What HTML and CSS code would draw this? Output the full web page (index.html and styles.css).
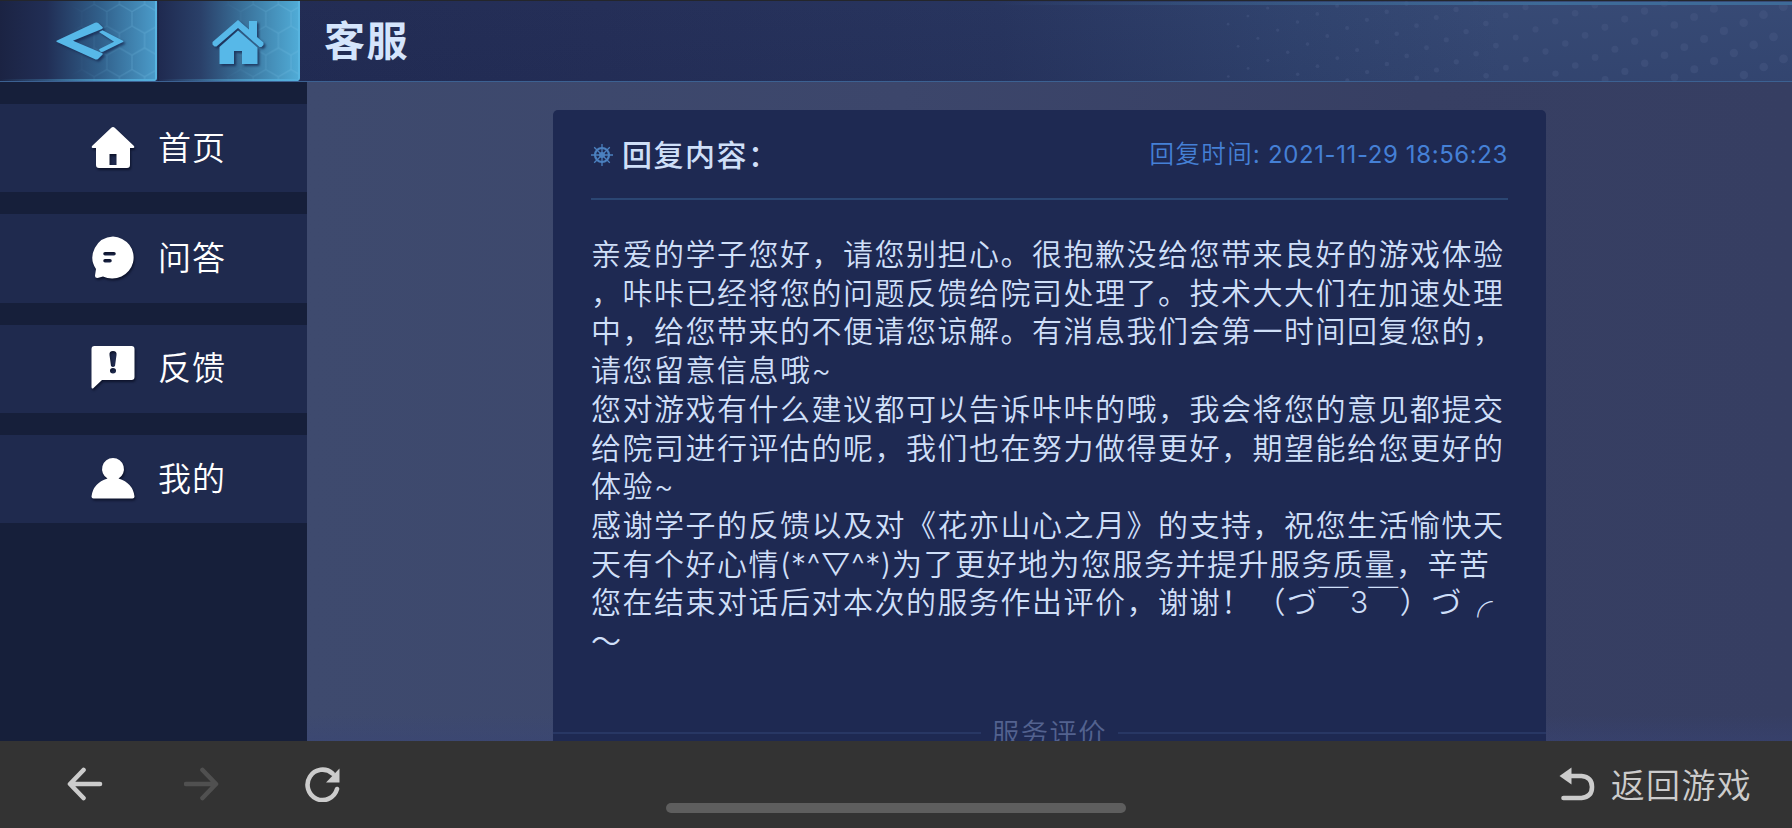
FILE: index.html
```html
<!DOCTYPE html>
<html lang="zh-CN">
<head>
    <meta charset="UTF-8">
    <title>客服</title>

    <link rel="stylesheet" href="styles.css">
</head>
<body>

<div id="page">
    <header class="header">
        <svg class="header-dots" id="dots" width="592" height="80" viewBox="0 0 592 80"></svg>
        <a class="tab tab-back">
            <svg class="hex" width="100%" height="100%">
                <defs>
                    <pattern id="hexes" width="25.2" height="43.6" patternUnits="userSpaceOnUse" patternTransform="translate(6 -4)">
                        <path d="M12.6 0v7.3M12.6 7.3L0 14.5M12.6 7.3l12.6 7.2M0 14.5v14.6M25.2 14.5v14.6M0 29.1l12.6 7.2 12.6-7.2M12.6 36.3v7.3" fill="none" stroke="#7cc4e8" stroke-width="1.2"/>
                    </pattern>
                </defs>
                <rect width="100%" height="100%" fill="url(#hexes)"/>
            </svg>
            <svg class="tab-icon" width="68" height="38" viewBox="0 0 68 38">
                <path d="M1 18.5L39 .8q2-.8 3.500.4L46.500 5q1 1-.5 2L17 18.800 46 31q1.300.8.300 1.800L42 37q-1.400 1-3.500 0L1 20q-1.200-.8 0-1.500z"/>
                <path d="M43 10l3.500-1.800L67 18.700q1 .8 0 1.400L47 29.800q-2 .5-3-.6l-1-2 15-7.400z"/>
            </svg>
        </a>
        <a class="tab tab-home">
            <svg class="hex" width="100%" height="100%">
                <rect width="100%" height="100%" fill="url(#hexes)"/>
            </svg>
            <svg class="tab-icon" width="52" height="44" viewBox="0 0 52 44">
                <path d="M26 0L37 9.500V1h8v16l6.500 5.500v2.500l-2 2-2 0L26 8 4.500 26.500l-2 0-2-2V22z"/>
                <path d="M26 10.500l19.500 17V44h-15.500V31h-8v13H7.500V27z"/>
            </svg>
        </a>
        <h1 class="title">客服</h1>
    </header>

    <div class="main">
        <nav class="menu">
            <a class="menu-item">
                <svg class="menu-icon" viewBox="0 0 44 44">
                    <path fill-rule="evenodd" d="M22 1q1 0 2 1l19 18q1 1.500-.5 2H39v17q0 3-3 3H8q-3 0-3-3V22H1.500q-1.500-.5-.5-2L20 2q1-1 2-1zM18.500 28v11h7V28z"/>
                </svg>
                <span>首页</span>
            </a>
            <a class="menu-item">
                <svg class="menu-icon" viewBox="0 0 44 44">
                    <path fill-rule="evenodd" d="M22 .5a21.500 21 0 1 1-10 40L6.500 42Q4 42 4 39.500L5 33A21.500 21 0 0 1 22 .5zM14 16a1.500 1.500 0 0 0 0 3.500h9a1.500 1.500 0 0 0 0-3.500zM14 23a1.500 1.500 0 0 0 0 3.500h5a1.500 1.500 0 0 0 0-3.500z"/>
                </svg>
                <span>问答</span>
            </a>
            <a class="menu-item">
                <svg class="menu-icon" viewBox="0 0 44 44">
                    <path fill-rule="evenodd" d="M3.500 0h37Q43.500 0 43.500 3v28q0 3-3 3H11L2 42.500Q.5 43 .5 41V3q0-3 3-3zM22 5q-4 0-3.500 4L20 20q2 2 4 0l1.500-11Q26 5 22 5zM22 22a3 2.700 0 1 0 0 5.400 3 2.700 0 1 0 0-5.400z"/>
                </svg>
                <span>反馈</span>
            </a>
            <a class="menu-item">
                <svg class="menu-icon" viewBox="0 0 44 44">
                    <path d="M22 1a11 11 0 0 1 5.500 20.500Q42 26 43.500 39.500q0 2-2 2H2.500q-2 0-2-2Q2 26 16.500 21.500A11 11 0 0 1 22 1z"/>
                </svg>
                <span>我的</span>
            </a>
        </nav>

        <div class="content">
            <div class="card">
                <div class="card-head">
                    <svg class="wheel" viewBox="0 0 22 22">
                        <circle cx="11" cy="11" r="7" stroke-width="2.2"/>
                        <circle cx="11" cy="11" r="2" stroke-width="2"/>
                        <path d="M11 0v22M0 11h22M3.200 3.200l15.600 15.600M18.800 3.200L3.200 18.800" stroke-width="1.3"/>
                    </svg>
                    <h2>回复内容：</h2>
                    <span class="time">回复时间: <span class="digits">2021-11-29 18:56:23</span></span>
                </div>
                <div class="text">
                    <p>
                        亲爱的学子您好，请您别担心。很抱歉没给您带来良好的游戏体验<br>，咔咔已经将您的问题反馈给院司处理了。技术大大们在加速处理<br>中，给您带来的不便请您谅解。有消息我们会第一时间回复您的，<br>请您留意信息哦<span class="latin">~</span>
                    </p>
                    <p>
                        您对游戏有什么建议都可以告诉咔咔的哦，我会将您的意见都提交<br>给院司进行评估的呢，我们也在努力做得更好，期望能给您更好的<br>体验<span class="latin">~</span>
                    </p>
                    <p>
                        感谢学子的反馈以及对《花亦山心之月》的支持，祝您生活愉快天<br>天有个好心情<span class="face">(*^▽^*)</span>为了更好地为您服务并提升服务质量，辛苦<br>您在结束对话后对本次的服务作出评价，谢谢！<span class="kiss">（づ￣<span class="latin">3</span>￣）づ</span><span class="arc">╭</span><br>～
                    </p>
                </div>
                <div class="rate"><span>服务评价</span></div>
            </div>
        </div>
    </div>

    <footer class="toolbar">
        <svg class="nav-icon" viewBox="0 0 36 36">
            <path d="M16.500 4L3 18l13.500 14M4 18h29"/>
        </svg>
        <svg class="nav-icon disabled" viewBox="0 0 36 36">
            <path d="M18.500 4L32 18 18.500 32M31 18H2"/>
        </svg>
        <svg class="nav-icon reload" viewBox="0 0 36 36">
            <path d="M28.500 7.500A15 15.200 0 1 0 33 23"/>
            <path class="solid" d="M35.500 2.500V16.500H22z"/>
        </svg>
        <a class="return">
            <svg class="nav-icon" viewBox="0 0 36 36">
                <path d="M10 10h12.500q10.500 1 10.500 11t-10.500 11H4.500"/>
                <path class="solid" d="M12.500 1.500v17L.5 10z"/>
            </svg>
            <span>返回游戏</span>
        </a>
        <i class="handle"></i>
    </footer>
</div>

    <script>
        'use strict';

        const svg = document.querySelector('#dots');

        // наклонная сетка точек, радиус растёт вправо
        for (let i = -20; i < 40; i++) {
            for (let j = -10; j < 20; j++) {
                const x = 67.7 + i * 19.8 + j * 49.6;
                const y = 7 - i * 8.1 + j * 5.9;

                if (x < 25 || x > 592 || y < 0 || y > 80) {
                    continue;
                }

                const dot = document.createElementNS('http://www.w3.org/2000/svg', 'circle');

                dot.setAttribute('cx', x);
                dot.setAttribute('cy', y);
                dot.setAttribute('r', 1.2 + x / 592 * 3.3);
                svg.appendChild(dot);
            }
        }
    </script>

</body>
</html>
```
FILE: styles.css
```css
* {
    box-sizing: border-box;
}

body {
    margin: 0;
    font-family: "Noto Sans CJK SC", sans-serif;
    font-weight: 350;
    background-color: #333;
}

svg {
    display: block;
    flex: none;
}

h1, h2, p {
    margin: 0;
}

#page {
    display: flex;
    flex-direction: column;
    width: 1792px;
    height: 828px;
    overflow: hidden;
}

/* header */
.header {
    position: relative;
    display: flex;
    flex: none;
    height: 82px;
    border-top: 1px solid #24262b;
    border-bottom: 1px solid #3c6192;
    background: linear-gradient(to bottom, rgba(62, 120, 165, 0) 0, rgba(20, 30, 70, 0.12) 100%),
        linear-gradient(to right, #202a50 0, #252f58 600px, #28355f 1000px, #31446f 1300px, #374a75 1500px, #374a75 100%);
}

.header::after {
    content: "";
    position: absolute;
    top: 1px;
    right: 0;
    width: 800px;
    height: 3px;
    background: linear-gradient(to right, rgba(62, 107, 152, 0), #3e6b98 70%);
}

.header-dots {
    position: absolute;
    right: 0;
    top: 0;
    fill: #485984;
    opacity: 0.45;
}

.tab {
    position: relative;
    display: flex;
    align-items: center;
    height: 80px;
    border-right: 2px solid #58b5e0;
    border-bottom-right-radius: 3px;
    background: linear-gradient(to right, #1b2343 0, #212e55 30%, #31608b 65%, #4a9ac8 100%);
}

.tab::after {
    content: "";
    position: absolute;
    left: 0;
    right: 0;
    bottom: 0;
    height: 2px;
    background: linear-gradient(to right, rgba(80, 170, 215, 0), #54aedb);
}

.tab-back {
    width: 157px;
    padding-left: 56px;
}

.tab-home {
    width: 142px;
    margin-left: 1px;
    padding-left: 53px;
    border-left: 1px solid #1c2544;
    background: linear-gradient(to right, #1f2a50 0, #2a4069 30%, #397099 60%, #50abd6 100%);
}

.tab-icon {
    position: relative;
    fill: #57b8e8;
    filter: drop-shadow(2px 2px 1px rgba(20, 35, 75, 0.7));
}

.tab-home .tab-icon {
    margin-top: 2px;
}

.hex {
    position: absolute;
    left: 0;
    top: 0;
    opacity: 0.28;
    -webkit-mask-image: linear-gradient(to right, transparent 45%, #000 90%);
    mask-image: linear-gradient(to right, transparent 45%, #000 90%);
}

.title {
    margin-left: 24px;
    line-height: 74px;
    font-size: 41px;
    font-weight: 700;
    letter-spacing: 1.5px;
    color: #d5e5fc;
}

/* main */
.main {
    display: flex;
    flex: none;
    height: 659px;
    overflow: hidden;
}

.menu {
    display: flex;
    flex-direction: column;
    gap: 22px;
    width: 307px;
    padding-top: 22px;
    background-color: #161f3a;
}

.menu-item {
    display: flex;
    align-items: center;
    height: 88.3px;
    padding-left: 91px;
    background-color: #1f2a4e;
    font-size: 33px;
    letter-spacing: 1px;
    color: #fff;
}

.menu-item span {
    padding-bottom: 5px;
}

.menu-icon {
    width: 44px;
    height: 44px;
    margin: 0 23px 1px 0;
    fill: #fff;
    filter: drop-shadow(1px 2px 1px rgba(5, 10, 30, 0.7));
}

.content {
    flex: 1;
    padding: 28px 246px 0;
    background: linear-gradient(to bottom, rgba(64, 75, 125, 0) 96%, rgba(56, 68, 120, 0.4) 100%),
        linear-gradient(to right, #3e4a6e 0, #3c466b 40%, #373f63 75%, #363e62 100%);
}

.card {
    height: 700px;
    padding: 0 38px;
    border-radius: 5px;
    background-color: #1e2952;
}

.card-head {
    display: flex;
    align-items: center;
    height: 90px;
    border-bottom: 2px solid #2b4673;
}

.wheel {
    width: 22px;
    height: 22px;
    margin: 1px 9px 0 0;
    fill: none;
    stroke: #4b80bf;
}

.card-head h2 {
    padding-bottom: 3px;
    font-size: 30px;
    font-weight: 500;
    letter-spacing: 1.5px;
    color: #cfdff8;
}

.time {
    margin-left: auto;
    padding-bottom: 4px;
    font-size: 24.5px;
    letter-spacing: 1.4px;
    color: #4580d6;
}

.digits {
    font-family: Inter, sans-serif;
    font-weight: 400;
    font-size: 24px;
    letter-spacing: 0.6px;
}

.text {
    padding-top: 33px;
    font-size: 30px;
    line-height: 38.7px;
    letter-spacing: 1.5px;
    white-space: nowrap;
    color: #cfdff8;
}

.latin,
.face {
    font-family: Inter, "Noto Sans CJK SC", sans-serif;
    line-height: 1;
    letter-spacing: 0;
}

.face {
    letter-spacing: 0.6px;
}

.kiss {
    margin-left: 3px;
}

.rate {
    display: flex;
    align-items: center;
    gap: 11px;
    margin: 54px -38px 0;
    font-size: 27.3px;
    line-height: 36px;
    letter-spacing: 1.5px;
    color: #53628f;
}

.rate span {
    padding-bottom: 4px;
}

.rate::before,
.rate::after {
    content: "";
    flex: 1;
    height: 2px;
    background-color: #283764;
}

/* toolbar */
.toolbar {
    position: relative;
    display: flex;
    flex: none;
    height: 87px;
    padding: 25px 40px 0 67px;
    background-color: #333;
}

.nav-icon {
    width: 36px;
    height: 36px;
    margin-right: 81px;
    fill: none;
    stroke: #ccc;
    stroke-width: 4.6;
    stroke-linecap: round;
    stroke-linejoin: round;
}

.nav-icon .solid {
    fill: #ccc;
    stroke: none;
}

.disabled {
    stroke: #505050;
}

.reload {
    margin-left: 3px;
}

.return {
    display: flex;
    align-items: center;
    height: 36px;
    margin-left: auto;
    font-size: 34px;
    letter-spacing: 1.3px;
    color: #ccc;
}

.return span {
    padding-bottom: 2px;
}

.return .nav-icon {
    margin-right: 16px;
}

.handle {
    position: absolute;
    left: 666px;
    bottom: 15px;
    width: 460px;
    height: 10px;
    border-radius: 5px;
    background-color: #5e5e5e;
}
```
